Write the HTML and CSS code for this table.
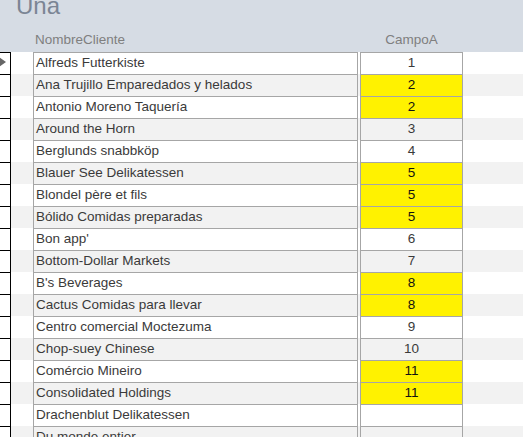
FILE: index.html
```html
<!DOCTYPE html>
<html>
<head>
<meta charset="utf-8">
<link rel="stylesheet" href="styles.css">
</head>
<body>
<div class="form">
  <div class="header">
    <div class="title">Una</div>
    <div class="labels">
      <div class="lbl-name">NombreCliente</div>
      <div class="lbl-campo">CampoA</div>
    </div>
  </div>
  <div class="rows">
    <div class="row"><div class="sel current"><span class="arrow"></span></div><div class="name">Alfreds Futterkiste</div><div class="campo">1</div></div>
    <div class="row alt"><div class="sel"></div><div class="name">Ana Trujillo Emparedados y helados</div><div class="campo hi">2</div></div>
    <div class="row"><div class="sel"></div><div class="name">Antonio Moreno Taquería</div><div class="campo hi">2</div></div>
    <div class="row alt"><div class="sel"></div><div class="name">Around the Horn</div><div class="campo">3</div></div>
    <div class="row"><div class="sel"></div><div class="name">Berglunds snabbköp</div><div class="campo">4</div></div>
    <div class="row alt"><div class="sel"></div><div class="name">Blauer See Delikatessen</div><div class="campo hi">5</div></div>
    <div class="row"><div class="sel"></div><div class="name">Blondel père et fils</div><div class="campo hi">5</div></div>
    <div class="row alt"><div class="sel"></div><div class="name">Bólido Comidas preparadas</div><div class="campo hi">5</div></div>
    <div class="row"><div class="sel"></div><div class="name">Bon app'</div><div class="campo">6</div></div>
    <div class="row alt"><div class="sel"></div><div class="name">Bottom-Dollar Markets</div><div class="campo">7</div></div>
    <div class="row"><div class="sel"></div><div class="name">B's Beverages</div><div class="campo hi">8</div></div>
    <div class="row alt"><div class="sel"></div><div class="name">Cactus Comidas para llevar</div><div class="campo hi">8</div></div>
    <div class="row"><div class="sel"></div><div class="name">Centro comercial Moctezuma</div><div class="campo">9</div></div>
    <div class="row alt"><div class="sel"></div><div class="name">Chop-suey Chinese</div><div class="campo">10</div></div>
    <div class="row"><div class="sel"></div><div class="name">Comércio Mineiro</div><div class="campo hi">11</div></div>
    <div class="row alt"><div class="sel"></div><div class="name">Consolidated Holdings</div><div class="campo hi">11</div></div>
    <div class="row"><div class="sel"></div><div class="name">Drachenblut Delikatessen</div><div class="campo"></div></div>
    <div class="row alt"><div class="sel"></div><div class="name">Du monde entier</div><div class="campo"></div></div>
  </div>
</div>
</body>
</html>
```
FILE: styles.css
```css
html, body {
  margin: 0;
  padding: 0;
  background: #ffffff;
  overflow: hidden;
}
.form {
  width: 523px;
  height: 437px;
  overflow: hidden;
  font-family: "Liberation Sans", Arial, sans-serif;
}
.header {
  height: 52px;
  background: #d6dce4;
  display: flex;
  flex-direction: column;
  justify-content: space-between;
  overflow: hidden;
}
.title {
  font-size: 24px;
  line-height: 24px;
  color: #7b8594;
  margin-top: -6px;
  margin-left: 16px;
}
.labels {
  display: flex;
  font-size: 13.5px;
  line-height: 16px;
  color: #7f7f7f;
  padding-bottom: 4px;
}
.lbl-name {
  margin-left: 35px;
  width: 325px;
}
.lbl-campo {
  width: 103px;
  text-align: center;
}
.row {
  display: flex;
  height: 22px;
  background: #ffffff;
  font-size: 13.5px;
  line-height: 20px;
  color: #3a3a3a;
}
.row.alt {
  background: #f2f2f2;
}
.sel {
  width: 10px;
  flex: none;
  background: #ffffff;
  border-top: 1px solid #000000;
  border-right: 1px solid #000000;
  position: relative;
}
.arrow {
  position: absolute;
  left: -1px;
  top: 4px;
  width: 0;
  height: 0;
  border-top: 5px solid transparent;
  border-bottom: 5px solid transparent;
  border-left: 7px solid #666666;
}
.name {
  flex: none;
  box-sizing: border-box;
  width: 325px;
  margin-left: 22px;
  padding-left: 2px;
  border-top: 1px solid #a6a6a6;
  border-left: 1px solid #a6a6a6;
  border-right: 1px solid #a6a6a6;
  white-space: nowrap;
  overflow: hidden;
}
.campo {
  flex: none;
  box-sizing: border-box;
  width: 103px;
  margin-left: 2px;
  border-top: 1px solid #a6a6a6;
  border-left: 1px solid #a6a6a6;
  border-right: 1px solid #a6a6a6;
  text-align: center;
}
.campo.hi {
  background: #fff200;
  color: #111111;
}
```
